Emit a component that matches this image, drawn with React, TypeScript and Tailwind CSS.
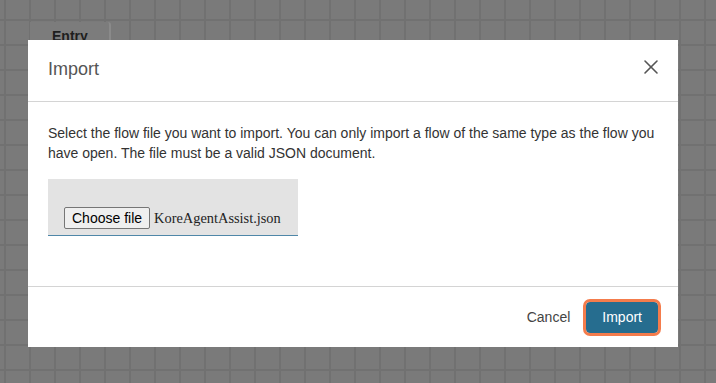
import { X } from 'lucide-react';

const sans = { fontFamily: '"Liberation Sans", Arial, sans-serif' };

function FilePicker() {
  return (
    <div className="w-[250px] h-[57px] bg-[#e3e3e3] border-b border-[#4f87a8] flex items-end pl-[16px] pb-[6px]">
      <button className="h-[22px] px-[7px] text-[14px] leading-none text-black bg-[#efefef] border border-[#767676] rounded-[2px]">
        Choose file
      </button>
      <span
        className="ml-[4px] text-[14.4px] leading-[21px] text-[#222]"
        style={{ fontFamily: '"Liberation Serif", "Times New Roman", serif' }}
      >
        KoreAgentAssist.json
      </span>
    </div>
  );
}

export default function App() {
  return (
    <div
      className="relative w-[716px] h-[383px] overflow-hidden bg-[#7a7a7a] [background-image:linear-gradient(to_right,#717171_2px,transparent_2px),linear-gradient(to_bottom,#717171_2px,transparent_2px)] [background-size:25px_25px] [background-position:4px_19px]"
      style={sans}
    >
      {/* flow node behind the overlay */}
      <div className="absolute left-[30px] top-[22px] w-[81px] h-[40px] bg-[#7c7c7c] border-r-2 border-[#8a8a8a] rounded-tr-[3px] pl-[22px] pt-[2px]">
        <span className="text-[14px] font-bold text-[#1e1e1e]">Entry</span>
      </div>

      {/* modal */}
      <div className="absolute inset-0 flex justify-start pl-[28px] pt-[40px]">
        <div className="w-[650px] h-[307px] bg-white flex flex-col">
          <div className="h-[62px] flex items-center justify-between pl-[20px] pr-[20px] border-b border-[#d4d4d4]">
            <h2 className="text-[18px] text-[#555] mt-[-3px]">Import</h2>
            <X className="w-[24px] h-[24px] text-[#555] mt-[-8px] mr-[-5px]" strokeWidth={1.6} />
          </div>
          <div className="flex-1 px-[20px] pt-[21px]">
            <p className="text-[14px] leading-[20px] text-[#333]">
              Select the flow file you want to import. You can only import a flow of the same type as the flow you
              have open. The file must be a valid JSON document.
            </p>
            <div className="mt-[16px]">
              <FilePicker />
            </div>
          </div>
          <div className="h-[61px] border-t border-[#d4d4d4] flex items-center justify-end gap-[16px] pr-[20px]">
            <button className="text-[14px] text-[#444] px-[0px]">Cancel</button>
            <button className="h-[31px] px-[16px] text-[14px] text-white bg-[#266d8f] rounded-[4px] outline-[3px] outline-solid outline-[#f47c4c] outline-offset-0">
              Import
            </button>
          </div>
        </div>
      </div>
    </div>
  );
}
